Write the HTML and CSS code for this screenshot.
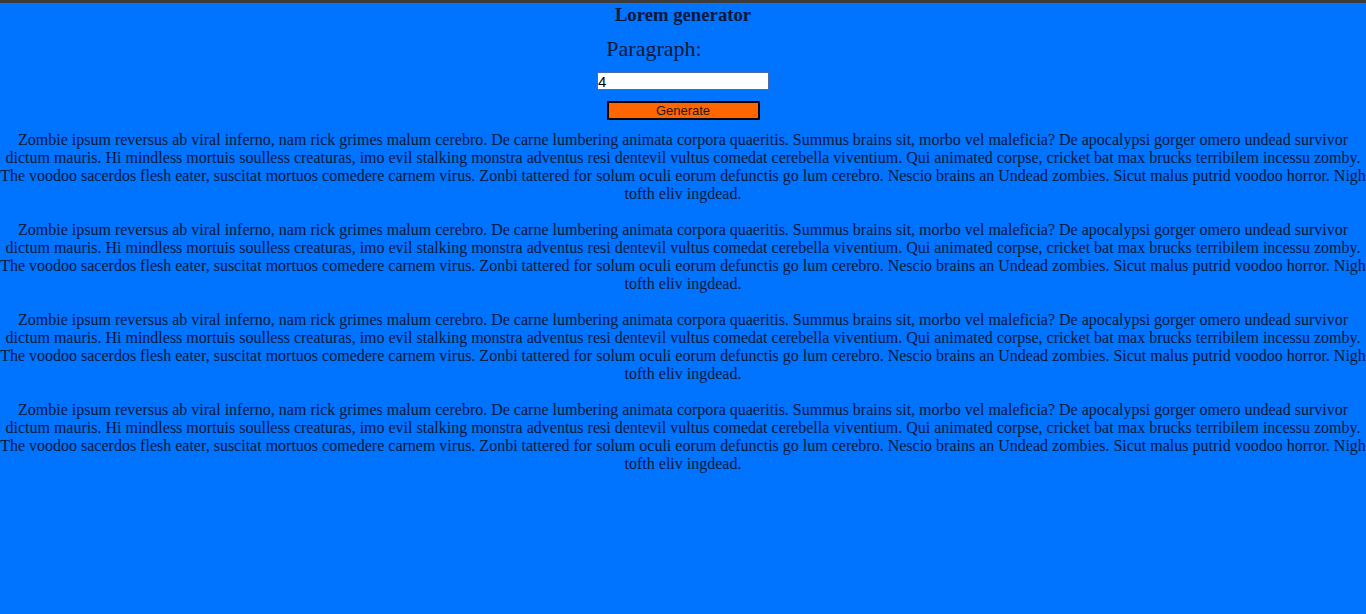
FILE: index.html
```html
<!DOCTYPE html>
<html>
<head>
<meta charset="utf-8">
<link rel="stylesheet" href="styles.css">
</head>
<body>
<div class="topbar"></div>
<main class="app">
  <h3 class="title">Lorem generator</h3>
  <form class="form">
    <label class="label" for="count">Paragraph:</label>
    <input class="input" id="count" type="number" value="4">
    <button class="btn" type="button">Generate</button>
  </form>
  <section class="output">
    <p>Zombie ipsum reversus ab viral inferno, nam rick grimes malum cerebro. De carne lumbering animata corpora quaeritis. Summus brains sit, morbo vel maleficia? De apocalypsi gorger omero undead survivor dictum mauris. Hi mindless mortuis soulless creaturas, imo evil stalking monstra adventus resi dentevil vultus comedat cerebella viventium. Qui animated corpse, cricket bat max brucks terribilem incessu zomby. The voodoo sacerdos flesh eater, suscitat mortuos comedere carnem virus. Zonbi tattered for solum oculi eorum defunctis go lum cerebro. Nescio brains an Undead zombies. Sicut malus putrid voodoo horror. Nigh tofth eliv ingdead.</p>
    <p>Zombie ipsum reversus ab viral inferno, nam rick grimes malum cerebro. De carne lumbering animata corpora quaeritis. Summus brains sit, morbo vel maleficia? De apocalypsi gorger omero undead survivor dictum mauris. Hi mindless mortuis soulless creaturas, imo evil stalking monstra adventus resi dentevil vultus comedat cerebella viventium. Qui animated corpse, cricket bat max brucks terribilem incessu zomby. The voodoo sacerdos flesh eater, suscitat mortuos comedere carnem virus. Zonbi tattered for solum oculi eorum defunctis go lum cerebro. Nescio brains an Undead zombies. Sicut malus putrid voodoo horror. Nigh tofth eliv ingdead.</p>
    <p>Zombie ipsum reversus ab viral inferno, nam rick grimes malum cerebro. De carne lumbering animata corpora quaeritis. Summus brains sit, morbo vel maleficia? De apocalypsi gorger omero undead survivor dictum mauris. Hi mindless mortuis soulless creaturas, imo evil stalking monstra adventus resi dentevil vultus comedat cerebella viventium. Qui animated corpse, cricket bat max brucks terribilem incessu zomby. The voodoo sacerdos flesh eater, suscitat mortuos comedere carnem virus. Zonbi tattered for solum oculi eorum defunctis go lum cerebro. Nescio brains an Undead zombies. Sicut malus putrid voodoo horror. Nigh tofth eliv ingdead.</p>
    <p>Zombie ipsum reversus ab viral inferno, nam rick grimes malum cerebro. De carne lumbering animata corpora quaeritis. Summus brains sit, morbo vel maleficia? De apocalypsi gorger omero undead survivor dictum mauris. Hi mindless mortuis soulless creaturas, imo evil stalking monstra adventus resi dentevil vultus comedat cerebella viventium. Qui animated corpse, cricket bat max brucks terribilem incessu zomby. The voodoo sacerdos flesh eater, suscitat mortuos comedere carnem virus. Zonbi tattered for solum oculi eorum defunctis go lum cerebro. Nescio brains an Undead zombies. Sicut malus putrid voodoo horror. Nigh tofth eliv ingdead.</p>
  </section>
</main>
</body>
</html>
```
FILE: styles.css
```css
html, body {
  margin: 0;
  padding: 0;
}
body {
  background: #0073ff;
  color: #0a1838;
  font-family: "Liberation Serif", "Times New Roman", serif;
  font-size: 16px;
  min-height: 614px;
  overflow: hidden;
}
.topbar {
  height: 3px;
  background: #3b3b3b;
  border-bottom: 1px solid #2f6fc0;
}
.app {
  text-align: center;
}
.title {
  margin: 0;
  font-size: 18.72px;
  font-weight: bold;
  line-height: 21px;
}
.form {
  display: flex;
  flex-direction: column;
  align-items: center;
}
.label {
  font-size: 22px;
  line-height: 25px;
  margin-top: 11px;
  margin-left: -58px;
}
.input {
  margin-top: 11px;
  width: 172px;
  height: 18px;
  box-sizing: border-box;
  border: 1px solid #4a6aa8;
  padding: 0;
  font-family: "Liberation Sans", Arial, sans-serif;
  font-size: 15px;
  line-height: 16px;
  background: #fff;
  color: #000;
  -moz-appearance: textfield;
}
.input::-webkit-inner-spin-button,
.input::-webkit-outer-spin-button {
  -webkit-appearance: none;
  margin: 0;
}
.btn {
  margin-top: 11px;
  width: 153px;
  height: 19px;
  box-sizing: border-box;
  border: 2px solid #000;
  background: #ff6600;
  color: #1a1a1a;
  font-family: "Liberation Sans", Arial, sans-serif;
  font-size: 13px;
  line-height: 14px;
  padding: 0;
}
.output {
  margin-top: 11px;
}
.output p {
  margin: 0 0 18px;
  line-height: 18px;
}
```
